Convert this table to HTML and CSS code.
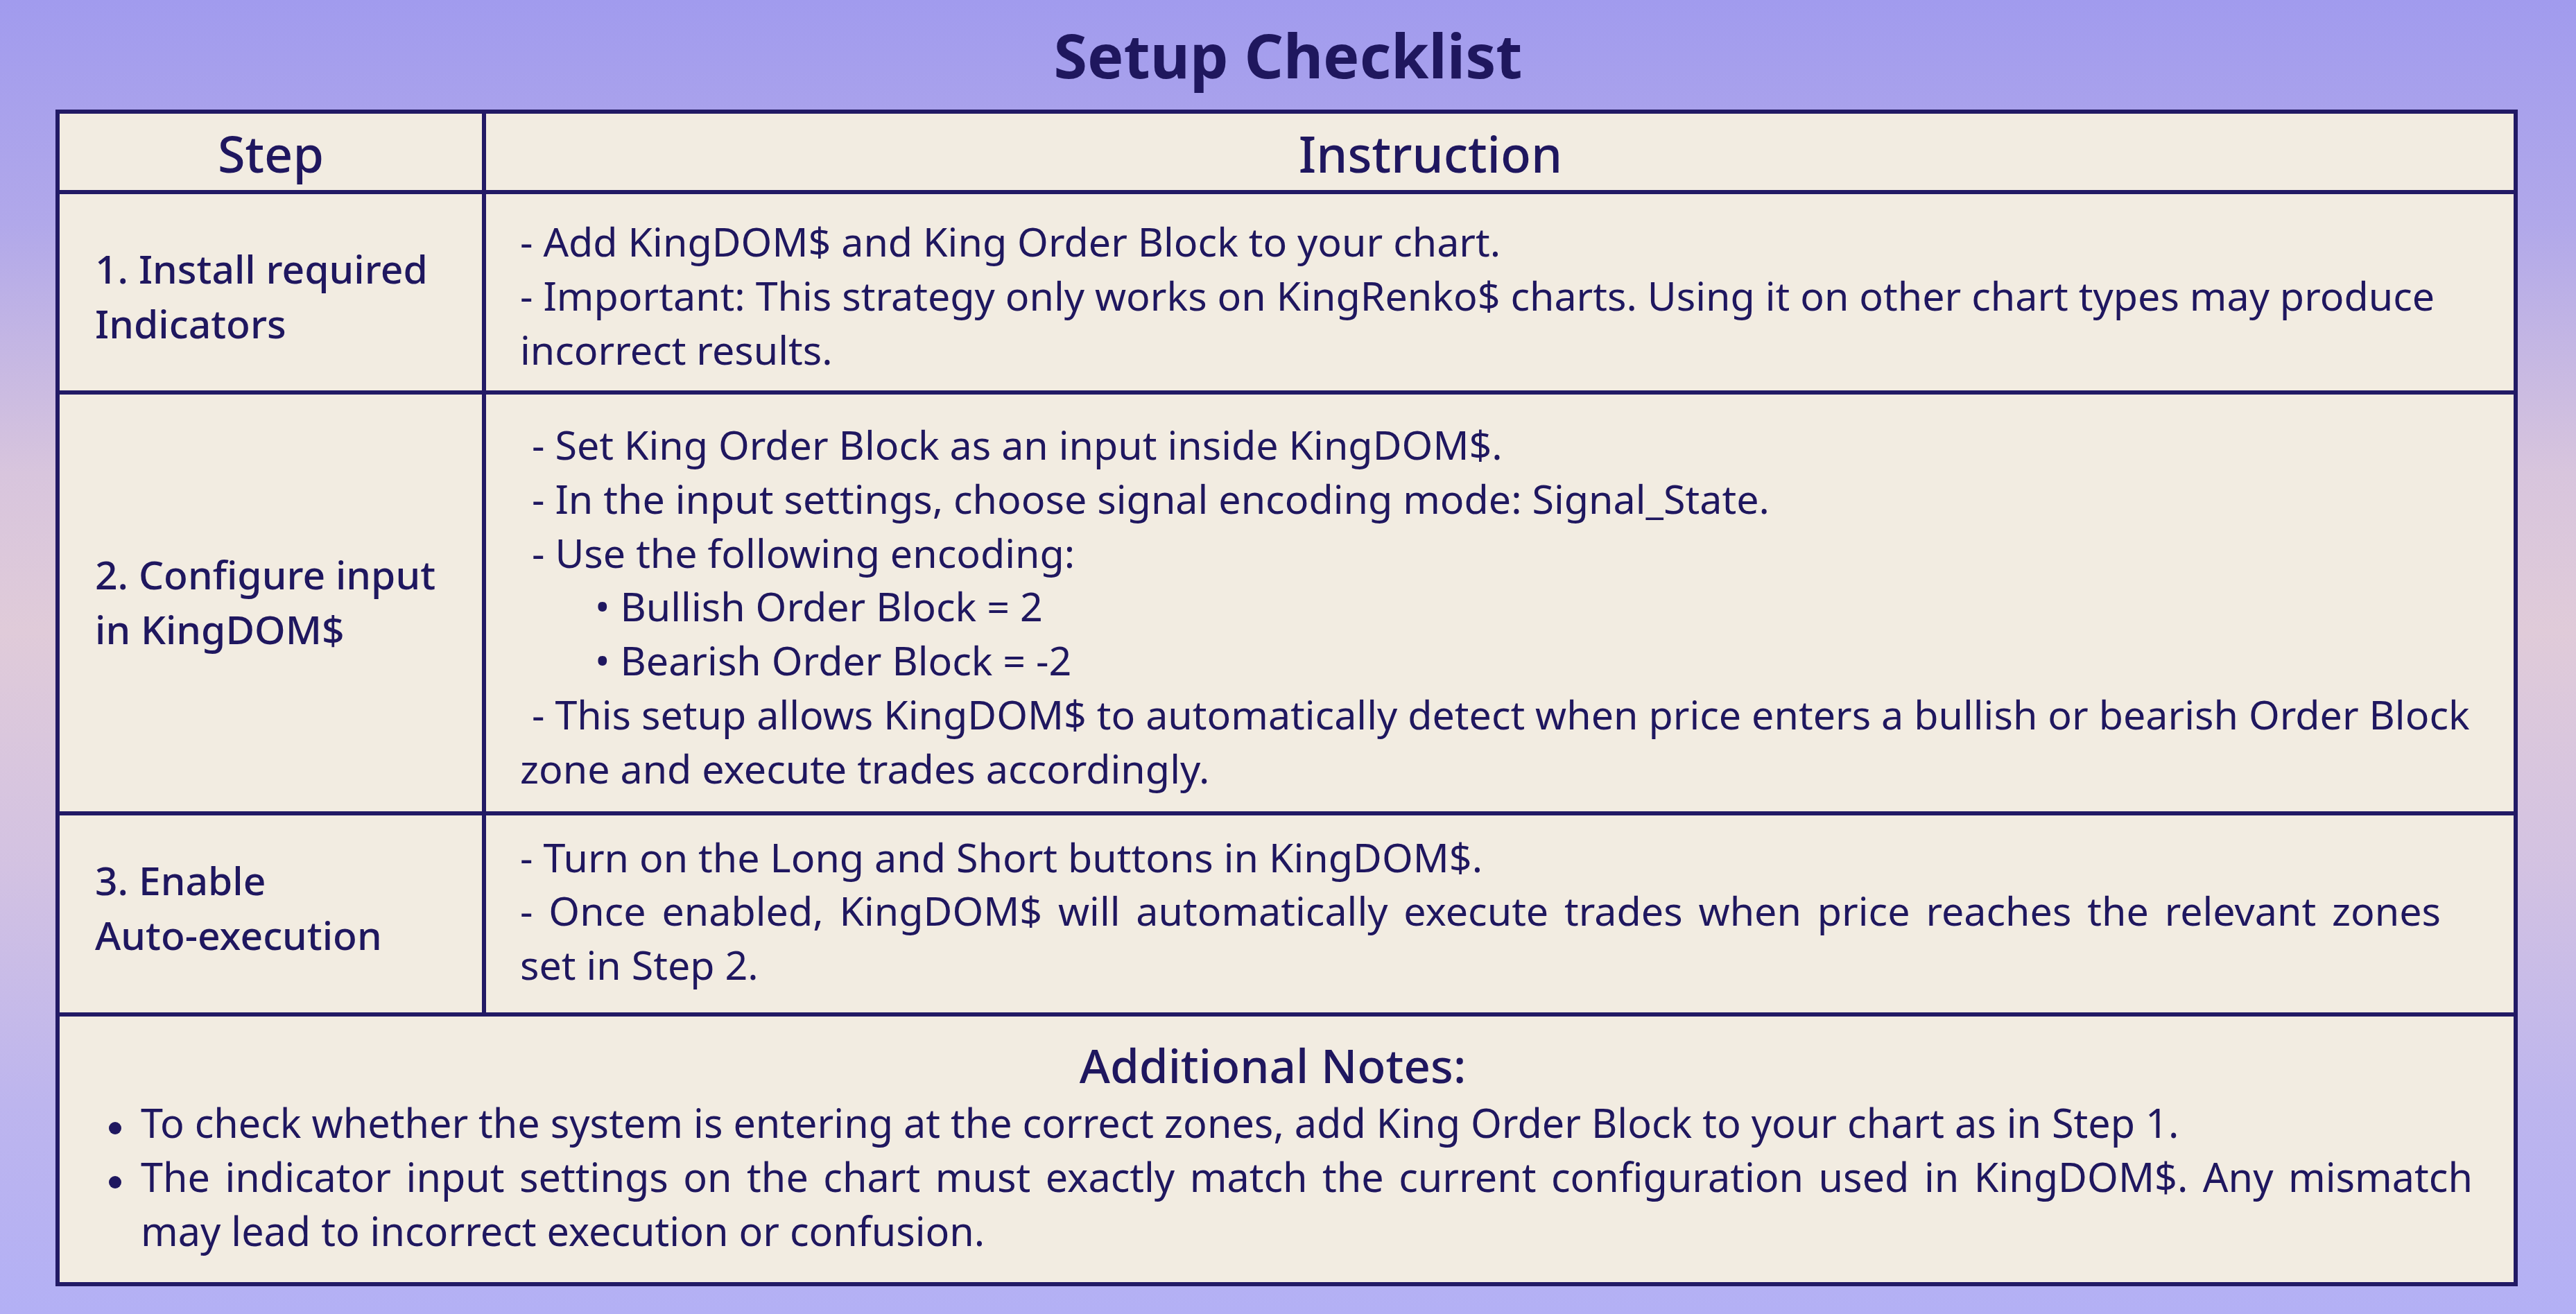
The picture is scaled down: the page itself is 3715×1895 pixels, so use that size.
FILE: index.html
```html
<!DOCTYPE html>
<html lang="en">
<head>
<meta charset="utf-8">
<title>Setup Checklist</title>
<link rel="stylesheet" href="styles.css">
</head>
<body>
  <h1 class="title">Setup Checklist</h1>
  <div class="sheet">
    <div class="row row-head">
      <div class="cell step-col head-cell">Step</div>
      <div class="cell instr-col head-cell head-instr">Instruction</div>
    </div>

    <div class="row row-1">
      <div class="cell step-col step-text">1. Install required<br>Indicators</div>
      <div class="cell instr-col body-text">
        <div class="line">- Add KingDOM$ and King Order Block to your chart.</div>
        <div class="line">- Important: This strategy only works on KingRenko$ charts. Using it on other chart types may produce</div>
        <div class="line">incorrect results.</div>
      </div>
    </div>

    <div class="row row-2">
      <div class="cell step-col step-text">2. Configure input<br>in KingDOM$</div>
      <div class="cell instr-col body-text">
        <div class="line lead-space">- Set King Order Block as an input inside KingDOM$.</div>
        <div class="line lead-space">- In the input settings, choose signal encoding mode: Signal_State.</div>
        <div class="line lead-space">- Use the following encoding:</div>
        <div class="line sub-item">• Bullish Order Block = 2</div>
        <div class="line sub-item">• Bearish Order Block = -2</div>
        <div class="line lead-space">- This setup allows KingDOM$ to automatically detect when price enters a bullish or bearish Order Block</div>
        <div class="line">zone and execute trades accordingly.</div>
      </div>
    </div>

    <div class="row row-3">
      <div class="cell step-col step-text">3. Enable<br>Auto-execution</div>
      <div class="cell instr-col body-text">
        <div class="line">- Turn on the Long and Short buttons in KingDOM$.</div>
        <div class="line justify">- Once enabled, KingDOM$ will automatically execute trades when price reaches the relevant zones</div>
        <div class="line">set in Step 2.</div>
      </div>
    </div>

    <div class="notes">
      <h2 class="notes-title">Additional Notes:</h2>
      <ul class="notes-list">
        <li class="note">To check whether the system is entering at the correct zones, add King Order Block to your chart as in Step 1.</li>
        <li class="note"><span class="line justify">The indicator input settings on the chart must exactly match the current configuration used in KingDOM$. Any mismatch</span><span class="line">may lead to incorrect execution or confusion.</span></li>
      </ul>
    </div>
  </div>
</body>
</html>
```
FILE: styles.css
```css
html, body {
  margin: 0;
  padding: 0;
}

body {
  width: 3715px;
  height: 1895px;
  overflow: hidden;
  font-family: "Noto Sans", "Open Sans", sans-serif;
  color: #1f175f;
  background: linear-gradient(to bottom,
    #a19bee 0%,
    #b1a8ea 17%,
    #d8c5dd 36%,
    #e0cbd9 48%,
    #d3c2e2 66%,
    #bdb5ee 84%,
    #b3b0f5 100%);
}

.title {
  margin: 0 0 19px 0;
  padding-top: 19px;
  height: 120px;
  line-height: 120px;
  font-size: 88px;
  font-weight: 700;
  text-align: center;
  color: #1f175e;
}

.sheet {
  margin-left: 80px;
  width: 3551px;
  box-sizing: border-box;
  border: 6px solid #221a65;
  background: #f2ece1;
}

.row {
  display: grid;
  grid-template-columns: 615px 1fr;
  border-bottom: 6px solid #221a65;
}

.row-head { height: 110px; }
.row-1 { height: 283px; }
.row-2 { height: 601px; }
.row-3 { height: 284px; }

.step-col {
  border-right: 6px solid #221a65;
}

.head-cell {
  display: flex;
  align-items: center;
  justify-content: center;
  padding-top: 3px;
  font-size: 72px;
  font-weight: 500;
  line-height: 1;
}

.head-instr {
  padding-right: 200px;
}

.step-text {
  padding-left: 51px;
  font-size: 57px;
  font-weight: 500;
  line-height: 79px;
}

.body-text {
  padding-left: 49px;
  font-size: 57.4px;
  font-weight: 400;
  line-height: 78px;
}

.line {
  display: block;
  white-space: nowrap;
}

.justify {
  white-space: normal;
  text-align: justify;
  text-align-last: justify;
}

.lead-space { padding-left: 17px; }
.sub-item { padding-left: 108px; }

.row-1 .step-text { padding-top: 68px; }
.row-1 .body-text { padding-top: 29px; }

.row-2 .step-text { padding-top: 220px; }
.row-2 .body-text { padding-top: 34px; line-height: 77.8px; }

.row-3 .step-text { padding-top: 54px; }
.row-3 .body-text { padding-top: 22px; padding-right: 105px; line-height: 77.3px; }

.notes {
  height: 383px;
  padding-top: 31px;
  box-sizing: border-box;
}

.notes-title {
  margin: 0 0 5px 0;
  padding-right: 40px;
  font-size: 67.5px;
  font-weight: 500;
  line-height: 78px;
  text-align: center;
}

.notes-list {
  list-style: none;
  margin: 0;
  padding: 0 59px 0 117px;
  font-size: 57.5px;
  line-height: 78px;
}

.note {
  position: relative;
}

.note::before {
  content: "";
  position: absolute;
  left: -46px;
  top: 38px;
  width: 18px;
  height: 18px;
  border-radius: 50%;
  background: #1f175f;
}
```
